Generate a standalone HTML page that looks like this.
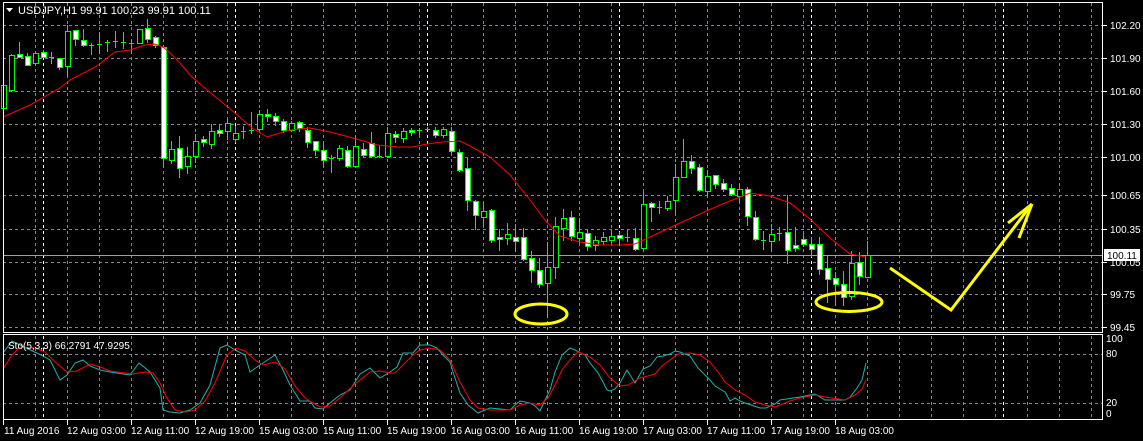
<!DOCTYPE html>
<html><head><meta charset="utf-8"><style>
html,body{margin:0;padding:0;background:#000;width:1143px;height:441px;overflow:hidden}
svg{display:block}
text{font-family:"Liberation Sans",sans-serif;font-size:10px;fill:#fff}
</style></head><body>
<svg id="s" width="1143" height="441" xmlns="http://www.w3.org/2000/svg"></svg>
<script>
const s=document.getElementById('s');let h='';
// vertical grid
for(let x=35;x<1103;x+=32){h+=`<line x1="${x+.5}" y1="3" x2="${x+.5}" y2="332" stroke="#778899" stroke-dasharray="3,3"/>`;h+=`<line x1="${x+.5}" y1="336" x2="${x+.5}" y2="419" stroke="#778899" stroke-dasharray="3,3"/>`;}
[43,235,427,619,811,1003].forEach(x=>{h+=`<line x1="${x+.5}" y1="3" x2="${x+.5}" y2="332" stroke="#fff" stroke-dasharray="3,3"/><line x1="${x+.5}" y1="336" x2="${x+.5}" y2="419" stroke="#fff" stroke-dasharray="3,3"/>`;});
const ph=[[25,'102.20'],[58,'101.90'],[91,'101.60'],[124,'101.30'],[157,'101.00'],[195,'100.65'],[229,'100.35'],[262,'100.05'],[294,'99.75'],[327,'99.45']];
ph.forEach(([y,t])=>{h+=`<line x1="3" y1="${y+.5}" x2="1103" y2="${y+.5}" stroke="#778899" stroke-dasharray="3,3"/><line x1="1103" y1="${y+.5}" x2="1107" y2="${y+.5}" stroke="#fff"/><text x="1110" y="${y+4}">${t}</text>`;});
[354,403].forEach(y=>h+=`<line x1="3" y1="${y+.5}" x2="1103" y2="${y+.5}" stroke="#778899" stroke-dasharray="3,3"/>`);
// last price line
h+=`<line x1="3" y1="255.5" x2="1103" y2="255.5" stroke="#a0a0a0"/>`;
// candles [open,close,high,low]
const c=[[108,85,80,112],[90,55,54,91],[54,57,42,57],[56,65,53,65],[63,53,51,66],[52,57,50,58],[57,58,52,64],[58,67,58,70],[66,31,25,77],[30,39,30,46],[40,45,29,47],[45,45,43,55],[44,44,32,54],[42,42,40,52],[41,41,31,48],[42,42,32,49],[43,43,40,52],[43,29,29,44],[28,39,19,43],[37,45,36,48],[47,158,45,168],
[160,149,141,164],[148,168,136,178],[166,156,147,174],[156,141,134,163],[139,142,136,147],[144,131,124,149],[130,133,124,137],[131,123,119,140],[139,133,126,143],[131,131,126,139],[130,130,112,134],[129,114,110,131],[114,116,109,122],[116,121,113,126],[121,130,119,133],[130,123,121,132],[122,128,121,132],[130,142,127,148],[141,150,141,156],[150,160,142,166],[158,158,155,173],[158,148,145,161],[150,166,146,168],[166,146,136,168],[149,155,143,158],[143,156,132,158],[156,156,146,158],[156,133,127,158],[134,137,131,143],[138,131,128,143],[130,132,128,136],[130,130,128,135],[129,129,127,130],[130,135,127,138],[135,129,127,138],[131,151,127,153],
[152,170,149,172],[168,200,158,211],[201,215,200,230],[217,211,202,226],[210,240,209,243],[237,239,229,251],[238,234,223,245],[237,241,224,252],[237,259,228,261],[258,270,251,283],[270,284,258,288],[283,267,242,318],[267,226,217,279],[228,218,209,241],[217,236,211,241],[238,232,218,243],[233,246,230,251],[245,240,236,251],[241,237,232,245],[240,236,230,243],[235,238,232,244],[237,237,230,242],[238,249,228,251],[248,204,192,249],
[203,207,202,222],[207,207,201,214],[208,201,196,211],[200,177,164,215],[177,161,139,178],[161,168,155,174],[167,190,164,192],[191,176,170,198],[175,184,175,189],[183,189,179,192],[188,194,184,196],[196,189,184,203],[189,216,187,226],[217,239,211,241],[240,240,231,250],[241,234,224,251],[233,233,227,241],[232,250,195,264],[245,248,227,252],[239,244,234,247],[244,249,237,257],[244,269,237,275],[268,279,255,303],[278,284,272,306],[284,297,271,306],[296,263,251,300],[262,276,252,285],[277,255,241,278]];
c.forEach((d,k)=>{const x=3+8*k;const [o,cl,hi,lo]=d;const t=Math.min(o,cl),b=Math.max(o,cl);
h+=`<line x1="${x+.5}" y1="${hi}" x2="${x+.5}" y2="${lo}" stroke="#00ff00"/>`;
if(b-t<2){h+=`<line x1="${x-2}" y1="${t+.5}" x2="${x+3}" y2="${t+.5}" stroke="#00ff00"/>`;}
else h+=`<rect x="${x-2+.5}" y="${t+.5}" width="5" height="${b-t}" fill="${cl>o?'#fff':'#000'}" stroke="#00ff00"/>`;});
const poly=(p,col)=>`<polyline fill="none" stroke="${col}" stroke-width="1" points="${p.map(a=>a.join(',')).join(' ')}"/>`;
h+=poly([[3,117],[30,105],[60,88],[70,80],[97,66],[115,52],[130,50],[145,45],[155,44],[163,47],[170,53],[180,63],[190,75],[200,84],[207,90],[235,113],[252,128],[267,137],[280,133],[290,130],[310,128],[330,132],[353,138],[377,145],[397,147],[413,147],[427,144],[443,142],[460,141],[470,146],[490,157],[510,175],[530,200],[545,220],[560,236],[580,242],[600,245],[620,245],[635,244],[650,237],[665,230],[680,223],[700,214],[720,205],[740,197],[750,193],[770,196],[790,203],[810,219],[830,238],[850,254],[866,257]],'#ff0000');
// stochastic
h+=poly([[3,353],[12,341],[20,345],[43,356],[50,360],[60,380],[67,375],[75,363],[83,360],[90,366],[100,370],[110,372],[130,375],[139,363],[150,372],[160,388],[163,410],[170,412],[180,413],[190,410],[200,403],[210,385],[220,348],[227,345],[235,350],[245,355],[250,372],[260,365],[275,355],[283,370],[290,385],[300,401],[310,401],[315,408],[323,409],[330,403],[340,395],[350,390],[360,374],[370,368],[380,378],[390,372],[397,367],[403,353],[413,353],[420,345],[430,345],[437,348],[443,355],[450,362],[455,378],[460,393],[468,405],[478,413],[485,410],[490,408],[510,410],[515,405],[520,401],[530,403],[535,406],[540,411],[545,400],[550,390],[555,372],[562,355],[570,348],[575,350],[585,355],[590,363],[598,373],[603,382],[607,390],[610,391],[615,389],[620,383],[627,370],[635,383],[643,369],[650,366],[657,357],[663,356],[670,354],[675,351],[680,352],[690,356],[698,368],[705,375],[710,380],[715,386],[720,389],[725,392],[730,401],[735,398],[740,401],[745,403],[760,408],[766,408],[775,404],[780,400],[800,397],[815,394],[825,400],[845,400],[850,397],[857,388],[862,380],[866,363]],'#20b2aa');
h+=poly([[3,369],[12,355],[20,347],[35,348],[45,352],[55,362],[67,372],[77,371],[90,364],[100,367],[110,371],[133,374],[145,372],[153,373],[160,383],[167,398],[175,410],[185,412],[195,410],[205,401],[215,383],[227,355],[236,348],[245,351],[255,360],[263,365],[275,362],[285,369],[295,386],[305,398],[320,407],[330,406],[340,398],[355,384],[370,372],[380,371],[390,373],[395,373],[403,365],[413,355],[420,350],[430,348],[440,350],[450,360],[460,382],[470,400],[478,408],[490,410],[510,410],[520,405],[530,403],[540,405],[548,398],[555,385],[562,370],[570,360],[578,352],[590,357],[600,365],[610,378],[620,386],[628,385],[640,378],[655,374],[662,366],[670,360],[678,354],[690,353],[700,355],[710,362],[718,372],[725,382],[735,390],[745,395],[755,402],[765,405],[775,407],[790,401],[800,398],[815,395],[825,397],[845,400],[855,395],[862,389],[866,380]],'#ff0000');
// borders
h+=`<rect x="3.5" y="2.5" width="1099" height="330" fill="none" stroke="#fff"/><rect x="3.5" y="334.5" width="1099" height="85" fill="none" stroke="#fff"/>`;
// annotations
h+=`<ellipse cx="541" cy="314" rx="26" ry="10" fill="none" stroke="#ffff00" stroke-width="3"/><ellipse cx="849" cy="302" rx="33" ry="9.5" fill="none" stroke="#ffff00" stroke-width="3"/>`;
h+=`<polyline points="890,268 951,310 1032,204" fill="none" stroke="#ffff00" stroke-width="3"/><line x1="1032" y1="204" x2="1008" y2="223" stroke="#ffff00" stroke-width="3"/><line x1="1032" y1="204" x2="1019" y2="238" stroke="#ffff00" stroke-width="3"/>`;
// price label
h+=`<rect x="1104" y="249" width="36" height="12" fill="#fff"/><text x="1107" y="259" style="fill:#000">100.11</text>`;
// indicator labels
[[342,'100'],[357,'80'],[406,'20'],[417,'0']].forEach(([y,t])=>h+=`<text x="1106" y="${y}">${t}</text>`);
// title
h+=`<polygon points="6,8 13,8 9.5,12" fill="#fff"/><text x="18" y="14" style="font-size:11px">USDJPY,H1  99.91 100.23 99.91 100.11</text>`;
h+=`<text x="8" y="349">Sto(5,3,3) 66.2791 47.9295</text>`;
// time axis
h+=`<text x="4" y="434">11 Aug 2016</text>`;
['12 Aug 03:00','12 Aug 11:00','12 Aug 19:00','15 Aug 03:00','15 Aug 11:00','15 Aug 19:00','16 Aug 03:00','16 Aug 11:00','16 Aug 19:00','17 Aug 03:00','17 Aug 11:00','17 Aug 19:00','18 Aug 03:00'].forEach((t,i)=>{const x=67+64*i;h+=`<line x1="${x+.5}" y1="420" x2="${x+.5}" y2="425" stroke="#fff"/><text x="${x}" y="434">${t}</text>`;});
h+=`<line x1="3.5" y1="420" x2="3.5" y2="425" stroke="#fff"/>`;
s.innerHTML=h;
</script>
</body></html>
